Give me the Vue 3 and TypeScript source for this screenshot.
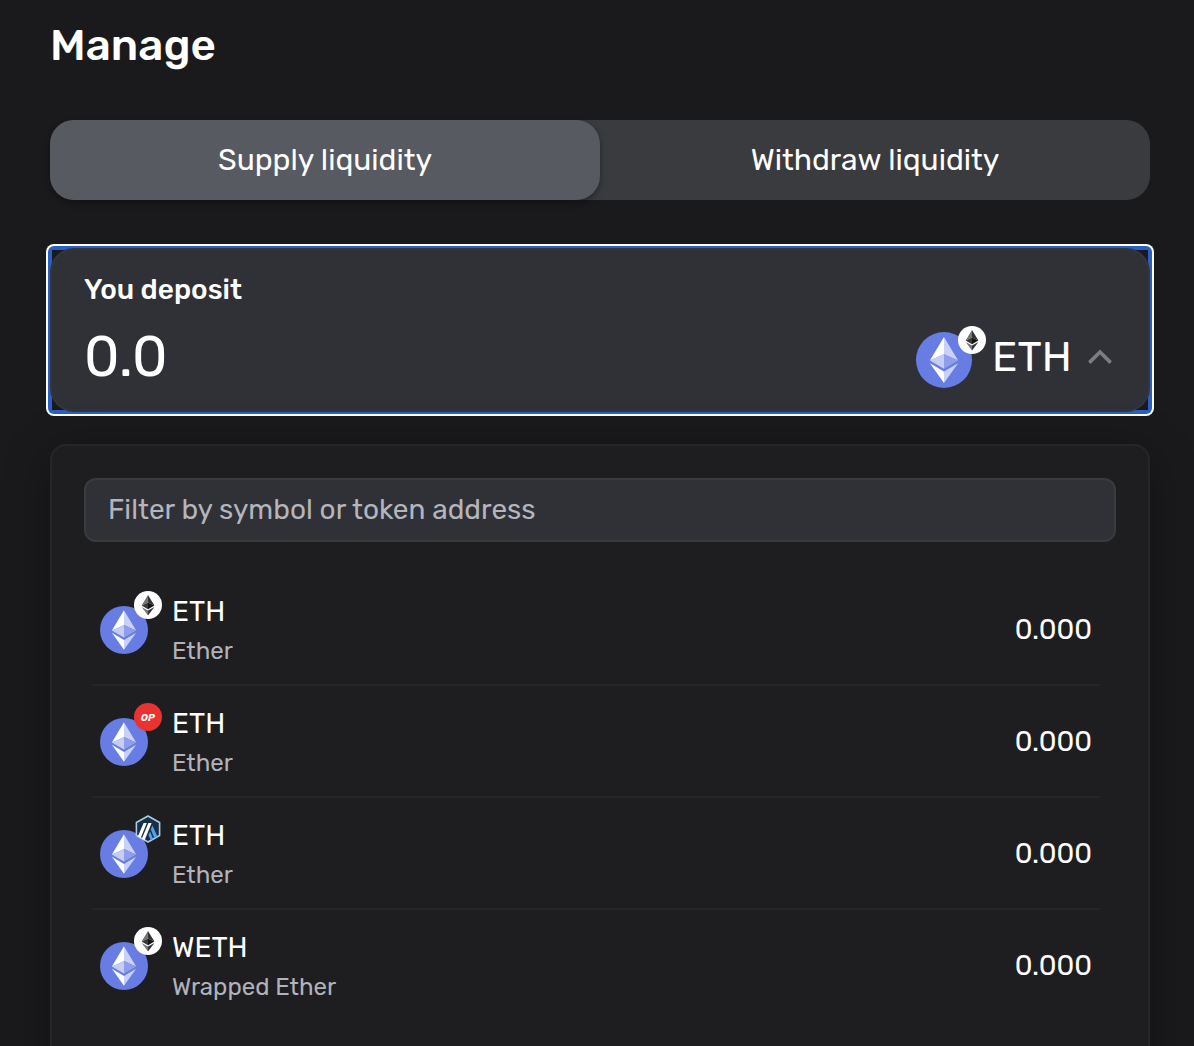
<script setup lang="ts">
import { ref } from 'vue'
import type { FunctionalComponent } from 'vue'
import { h } from 'vue'

type Chain = 'mainnet' | 'optimism' | 'arbitrum'

interface Token {
  symbol: string
  name: string
  chain: Chain
  balance: string
}

const tokens: Token[] = [
  { symbol: 'ETH', name: 'Ether', chain: 'mainnet', balance: '0.000' },
  { symbol: 'ETH', name: 'Ether', chain: 'optimism', balance: '0.000' },
  { symbol: 'ETH', name: 'Ether', chain: 'arbitrum', balance: '0.000' },
  { symbol: 'WETH', name: 'Wrapped Ether', chain: 'mainnet', balance: '0.000' },
]

const activeTab = ref<'supply' | 'withdraw'>('supply')

const poly = (fill: string, d: string) => h('path', { fill, d })

const EtherIcon: FunctionalComponent = () =>
  h('svg', { viewBox: '0 0 48 48' }, [
    h('circle', { cx: 24, cy: 24, r: 24, fill: '#687de3' }),
    poly('#ffffff', 'M24 4.2L11.9 24.5L24 19Z'),
    poly('#c9d1f8', 'M24 4.2L36.1 24.5L24 19Z'),
    poly('#c5cdf7', 'M24 19L11.9 24.5L24 31.6Z'),
    poly('#8e9eeb', 'M24 19L36.1 24.5L24 31.6Z'),
    poly('#ffffff', 'M11.9 26.8L24 33.9V43.8Z'),
    poly('#c9d1f8', 'M36.1 26.8L24 33.9V43.8Z'),
  ])

const ChainIcon: FunctionalComponent<{ chain: Chain }> = (props) => {
  if (props.chain === 'optimism') {
    return h('svg', { viewBox: '0 0 28 28' }, [
      h('circle', { cx: 14, cy: 14, r: 14, fill: '#e93330' }),
      h('text', { x: 13.8, y: 17.6, class: 'op-mark', 'text-anchor': 'middle', textLength: 14, lengthAdjust: 'spacingAndGlyphs' }, 'OP'),
    ])
  }
  if (props.chain === 'arbitrum') {
    return h('svg', { viewBox: '0 0 28 28' }, [
      h('path', { d: 'M14 1L25.6 7.5V20.5L14 27L2.4 20.5V7.5Z', fill: '#1c2e43', stroke: '#a5cce8', 'stroke-width': 1.6, 'stroke-linejoin': 'round' }),
      poly('#ffffff', 'M9.6 8H12.8L6.6 23.2L3.8 21.6Z'),
      poly('#ffffff', 'M14.4 8H17.6L10.6 25.3L7.8 23.8Z'),
      poly('#4fa4ec', 'M18.4 10.6L23.4 21.4L20.4 23.2L16.8 14.4Z'),
      poly('#4fa4ec', 'M16 16.4L19.2 23.9L16.8 25.2L14.5 20Z'),
    ])
  }
  return h('svg', { viewBox: '0 0 28 28' }, [
    h('circle', { cx: 14, cy: 14, r: 14, fill: '#ffffff' }),
    poly('#747474', 'M14 4L7.6 14.5L14 11.6Z'),
    poly('#333333', 'M14 4L20.4 14.5L14 11.6Z'),
    poly('#393939', 'M14 11.6L7.6 14.5L14 18.2Z'),
    poly('#151515', 'M14 11.6L20.4 14.5L14 18.2Z'),
    poly('#777777', 'M7.6 15.9L14 19.5V24.4Z'),
    poly('#343434', 'M20.4 15.9L14 19.5V24.4Z'),
  ])
}
</script>

<template>
  <main class="page">
    <h1 class="title"><span>Manage</span></h1>

    <div class="tabs">
      <button class="tab" :class="{ active: activeTab === 'supply' }" @click="activeTab = 'supply'">
        <span>Supply liquidity</span>
      </button>
      <button class="tab" :class="{ active: activeTab === 'withdraw' }" @click="activeTab = 'withdraw'">
        <span>Withdraw liquidity</span>
      </button>
    </div>

    <div class="focus-ring">
      <div class="ring-inner">
        <section class="deposit">
          <div class="deposit-label"><span>You deposit</span></div>
          <div class="deposit-row">
            <span class="amount">0.0</span>
            <div class="selected">
              <div class="token-icon large">
                <EtherIcon class="coin" />
                <ChainIcon class="badge" chain="mainnet" />
              </div>
              <span class="selected-symbol">ETH</span>
              <svg class="chevron" viewBox="0 0 24 16"><path d="M1.3 13.6L12 3L22.7 13.6" /></svg>
            </div>
          </div>
        </section>
      </div>
    </div>

    <section class="picker">
      <div class="filter"><span>Filter by symbol or token address</span></div>
      <ul class="list">
        <li v-for="(token, i) in tokens" :key="i" class="row">
          <div class="token-icon">
            <EtherIcon class="coin" />
            <ChainIcon class="badge" :chain="token.chain" />
          </div>
          <div class="names">
            <span class="symbol">{{ token.symbol }}</span>
            <span class="name">{{ token.name }}</span>
          </div>
          <span class="balance">{{ token.balance }}</span>
        </li>
      </ul>
    </section>
  </main>
</template>

<style>
body {
  background: #1a1a1c;
}
.op-mark {
  font: italic 700 10px Rubik, Inter, sans-serif;
  fill: #fff;
}
</style>

<style scoped>
.page {
  box-sizing: border-box;
  height: 1046px;
  overflow: hidden;
  padding: 0 40px 0 46px;
  background: #1a1a1c;
  color: #fff;
  font-family: Rubik, Roboto, sans-serif;
}
.title {
  margin: 0 0 0 4px;
  height: 120px;
  line-height: 90px;
  font-size: 44px;
  font-weight: 500;
}
.tabs {
  display: flex;
  height: 80px;
  margin: 0 4px 44px;
  border-radius: 24px;
  background: #3a3b3f;
}
.tab {
  flex: 1;
  border: 0;
  padding: 0;
  border-radius: 24px;
  background: transparent;
  color: #fff;
  font: 400 30px/80px Rubik, Roboto, sans-serif;
}
.tab.active {
  background: #575a61;
  box-shadow: 0 3px 6px rgba(0, 0, 0, 0.35);
}
.focus-ring {
  height: 172px;
  box-sizing: border-box;
  padding: 2px;
  border-radius: 8px;
  background: #fff;
}
.ring-inner {
  height: 168px;
  box-sizing: border-box;
  padding: 2px;
  border-radius: 6px;
  background: linear-gradient(#1a1a1c, #1a1a1c) center / calc(100% - 8px) calc(100% - 8px) no-repeat #2a5fc4;
}
.deposit {
  box-sizing: border-box;
  height: 164px;
  border: 2px solid #35363b;
  border-radius: 24px;
  background: #303136;
  padding: 20px 36px 0 32px;
}
.deposit-label {
  height: 40px;
  line-height: 40px;
  font-size: 28px;
  font-weight: 500;
}
.deposit-row {
  display: flex;
  justify-content: space-between;
  align-items: center;
  height: 94px;
}
.amount {
  font-size: 56px;
}
.selected {
  display: flex;
  align-items: center;
}
.token-icon {
  position: relative;
  width: 48px;
  height: 48px;
  flex: none;
  margin-top: 2px;
}
.token-icon.large {
  width: 56px;
  height: 56px;
  margin: 6px 20px 0 0;
}
.coin {
  display: block;
  width: 100%;
  height: 100%;
}
.badge {
  position: absolute;
  width: 28px;
  height: 28px;
  top: -15px;
  right: -14px;
}
.large .badge {
  top: -6px;
}
.selected-symbol {
  width: 79px;
  margin-right: 17px;
  font-size: 42px;
}
.chevron {
  width: 24px;
  height: 16px;
  fill: none;
  stroke: #7c7d83;
  stroke-width: 3.6;
}
.picker {
  box-sizing: border-box;
  height: 640px;
  margin: 28px 4px 0;
  padding: 32px 32px 0;
  border: 2px solid #252628;
  border-radius: 16px;
  background: #1e1e20;
  box-shadow: 0 8px 48px rgba(0, 0, 0, 0.3);
}
.filter {
  box-sizing: border-box;
  height: 64px;
  border: 2px solid #3a3b3f;
  border-radius: 12px;
  background: #303136;
  padding-left: 22px;
  color: #b4b5bd;
  font-size: 28px;
  line-height: 60px;
}
.list {
  list-style: none;
  margin: 32px 16px 0 8px;
  padding: 0;
}
.row {
  box-sizing: border-box;
  display: flex;
  height: 112px;
  padding: 0 8px;
  align-items: center;
  border-bottom: 2px solid #252628;
}
.row:last-child {
  border-color: transparent;
}
.names {
  display: flex;
  flex-direction: column;
  margin-left: 24px;
  padding-top: 4px;
}
.symbol {
  font-size: 28px;
  line-height: 40px;
}
.name {
  font-size: 24px;
  line-height: 38px;
  color: #b1b2ba;
}
.balance {
  margin-left: auto;
  font-size: 28px;
}
</style>
